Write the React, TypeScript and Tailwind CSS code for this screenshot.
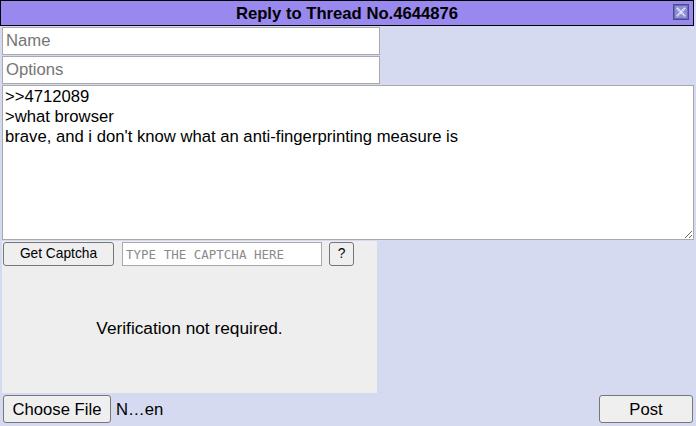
function CloseIcon({ className }: { className?: string }) {
  return (
    <svg className={className} width="16" height="16" viewBox="0 0 16 16">
      <rect x="0.5" y="0.5" width="15" height="15" fill="#6a6ab4" stroke="#4a4a8e" />
      <rect x="2" y="2" width="12" height="12" fill="#8e8ed4" />
      <path d="M4 4l8 8M12 4l-8 8" stroke="#f2f2ff" strokeWidth="2" strokeDasharray="1.5 0.6" />
    </svg>
  );
}

export default function App() {
  return (
    <div className="h-[426px] w-[696px] overflow-hidden bg-[#d6daf0] font-['Liberation_Sans',Arial,sans-serif] text-black">
      <div className="relative flex h-[26px] w-[694px] items-center justify-center border border-black bg-[#9988ee] text-[16.67px] font-bold">
        Reply to Thread No.4644876
        <CloseIcon className="absolute right-[4px] top-[3px]" />
      </div>

      <div className="mt-[1px] flex w-[694px] flex-col gap-[1px] pl-[2px]">
        <input
          placeholder="Name"
          className="h-[28px] w-[378px] border border-[#aaaaaa] bg-white px-[3px] text-[16.67px] outline-none placeholder:text-[#757575]"
        />
        <input
          placeholder="Options"
          className="h-[28px] w-[378px] border border-[#aaaaaa] bg-white px-[3px] text-[16.67px] outline-none placeholder:text-[#757575]"
        />
        <textarea
          defaultValue={">>4712089\n>what browser\nbrave, and i don't know what an anti-fingerprinting measure is"}
          className="h-[155px] w-[692px] resize border border-[#a9a9a9] bg-white px-[2px] py-[1px] text-[16.67px] leading-[20px] outline-none"
        />

        <div className="flex h-[152px] w-[375px] flex-col bg-[#eeeeee] p-[1px]">
          <div className="flex items-center">
            <button className="h-[24px] w-[111px] rounded-[3px] border border-[#767676] bg-[#efefef] text-[13.75px]">
              Get Captcha
            </button>
            <input
              placeholder="TYPE THE CAPTCHA HERE"
              className="ml-[8px] h-[24px] w-[200px] border border-[#a9a9a9] bg-white px-[3px] font-['DejaVu_Sans_Mono',monospace] text-[12.5px] outline-none placeholder:text-[#8a8a8a]"
            />
            <button className="ml-[7px] h-[24px] w-[25px] rounded-[3px] border border-[#767676] bg-[#efefef] text-[13.75px]">
              ?
            </button>
          </div>
          <div className="flex flex-1 items-center justify-center text-[17.3px]">
            Verification not required.
          </div>
        </div>

        <div className="mt-[1px] flex items-center pl-[1px] pr-[1px]">
          <button className="h-[28px] w-[108px] rounded-[3px] border border-[#767676] bg-[#efefef] text-[16.67px]">
            Choose File
          </button>
          <span className="ml-[5px] text-[16.67px]">N…en</span>
          <button className="ml-auto h-[28px] w-[94px] rounded-[3px] border border-[#767676] bg-[#efefef] text-[16.67px]">
            Post
          </button>
        </div>
      </div>
    </div>
  );
}
